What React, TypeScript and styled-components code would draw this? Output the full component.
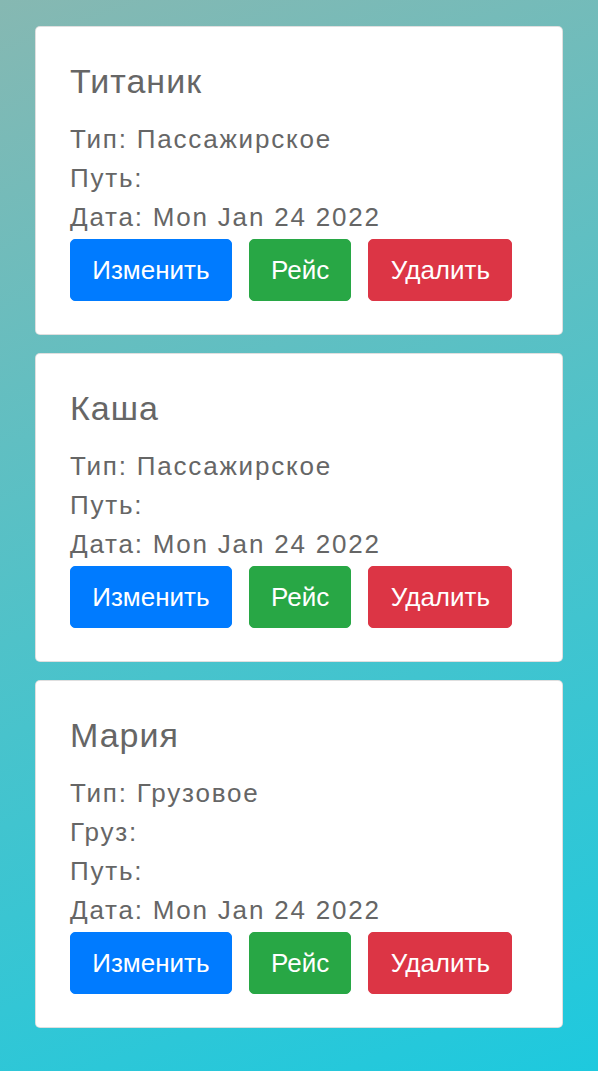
import React from "react";
import styled, { createGlobalStyle } from "styled-components";

const Global = createGlobalStyle`
  html, body { margin: 0; padding: 0; }
  body {
    min-height: 100vh;
    background: linear-gradient(160deg, #86b8b2 0%, #4fc2c9 50%, #1ec9de 100%);
    background-attachment: fixed;
    font-family: "Liberation Sans", Arial, sans-serif;
  }
`;

const Page = styled.div`
  display: flex;
  flex-direction: column;
  gap: 18px;
  padding: 26px 35px 43px;
`;

const Card = styled.div`
  background: #fff;
  border: 1px solid rgba(0, 0, 0, 0.125);
  border-radius: 5px;
  padding: 34px 34px 33px;
  display: flex;
  flex-direction: column;
`;

const Title = styled.h2`
  margin: 0 0 19px;
  font-size: 34px;
  line-height: 40px;
  font-weight: 400;
  letter-spacing: 1px;
  color: #666;
`;

const Line = styled.div`
  font-size: 26px;
  line-height: 39px;
  letter-spacing: 1.8px;
  color: #666;
`;

const Buttons = styled.div`
  display: flex;
  gap: 17px;
  margin-top: 2px;
`;

const Button = styled.button<{ $bg: string }>`
  height: 62px;
  padding: 0 21.25px;
  border: 1px solid ${(p) => p.$bg};
  border-radius: 5px;
  background: ${(p) => p.$bg};
  color: #fff;
  font-family: "Liberation Sans", Arial, sans-serif;
  font-size: 26px;
  line-height: 1;
  cursor: pointer;
`;

type Ship = { name: string; lines: string[] };

const ships: Ship[] = [
  { name: "Титаник", lines: ["Тип: Пассажирское", "Путь:", "Дата: Mon Jan 24 2022"] },
  { name: "Каша", lines: ["Тип: Пассажирское", "Путь:", "Дата: Mon Jan 24 2022"] },
  { name: "Мария", lines: ["Тип: Грузовое", "Груз:", "Путь:", "Дата: Mon Jan 24 2022"] },
];

export default function App() {
  return (
    <>
      <Global />
      <Page>
        {ships.map((s) => (
          <Card key={s.name}>
            <Title>{s.name}</Title>
            {s.lines.map((l) => (
              <Line key={l}>{l}</Line>
            ))}
            <Buttons>
              <Button $bg="#007bff">Изменить</Button>
              <Button $bg="#28a745">Рейс</Button>
              <Button $bg="#dc3545">Удалить</Button>
            </Buttons>
          </Card>
        ))}
      </Page>
    </>
  );
}
